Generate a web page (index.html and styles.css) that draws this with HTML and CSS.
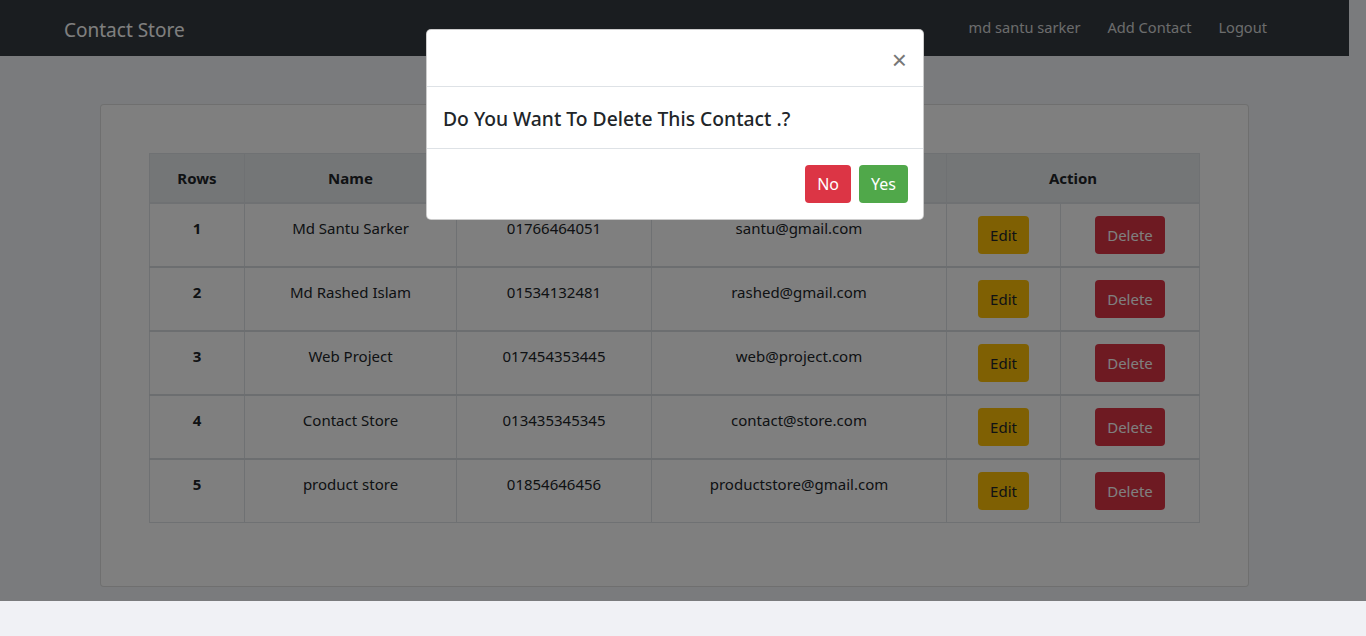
FILE: index.html
```html
<!DOCTYPE html>
<html lang="en">
<head>
<meta charset="utf-8">
<title>Contact Store</title>
<link rel="stylesheet" href="styles.css">
</head>
<body>
<div class="screen">
  <div class="page">
    <nav class="navbar">
      <a class="brand" href="#">Contact Store</a>
      <ul class="nav-links">
        <li><a href="#">md santu sarker</a></li>
        <li><a href="#">Add Contact</a></li>
        <li><a href="#">Logout</a></li>
      </ul>
    </nav>
    <main class="container">
      <div class="card">
        <table class="table">
          <thead>
            <tr>
              <th class="c-row">Rows</th>
              <th class="c-name">Name</th>
              <th class="c-phone">Phone</th>
              <th class="c-email">Email</th>
              <th colspan="2">Action</th>
            </tr>
          </thead>
          <tbody>
            <tr>
              <td class="num">1</td><td>Md Santu Sarker</td><td>01766464051</td><td>santu@gmail.com</td>
              <td class="c-edit"><button class="btn btn-warning">Edit</button></td>
              <td class="c-del"><button class="btn btn-danger">Delete</button></td>
            </tr>
            <tr>
              <td class="num">2</td><td>Md Rashed Islam</td><td>01534132481</td><td>rashed@gmail.com</td>
              <td class="c-edit"><button class="btn btn-warning">Edit</button></td>
              <td class="c-del"><button class="btn btn-danger">Delete</button></td>
            </tr>
            <tr>
              <td class="num">3</td><td>Web Project</td><td>017454353445</td><td>web@project.com</td>
              <td class="c-edit"><button class="btn btn-warning">Edit</button></td>
              <td class="c-del"><button class="btn btn-danger">Delete</button></td>
            </tr>
            <tr>
              <td class="num">4</td><td>Contact Store</td><td>013435345345</td><td>contact@store.com</td>
              <td class="c-edit"><button class="btn btn-warning">Edit</button></td>
              <td class="c-del"><button class="btn btn-danger">Delete</button></td>
            </tr>
            <tr>
              <td class="num">5</td><td>product store</td><td>01854646456</td><td>productstore@gmail.com</td>
              <td class="c-edit"><button class="btn btn-warning">Edit</button></td>
              <td class="c-del"><button class="btn btn-danger">Delete</button></td>
            </tr>
          </tbody>
        </table>
      </div>
    </main>
  </div>
  <div class="backdrop"></div>
  <div class="modal" role="dialog">
    <div class="modal-header">
      <button class="close" aria-label="Close">&times;</button>
    </div>
    <div class="modal-body">
      <h5 class="modal-text">Do You Want To Delete This Contact .?</h5>
    </div>
    <div class="modal-footer">
      <button class="btn btn-danger">No</button>
      <button class="btn btn-success">Yes</button>
    </div>
  </div>
</div>
<div class="bottom"></div>
</body>
</html>
```

FILE: styles.css
```css
* { box-sizing: border-box; }

body {
  margin: 0;
  background: #f0f1f5;
  font-family: "Noto Sans", "Open Sans", sans-serif;
  font-size: 15px;
  color: #212529;
}

.screen {
  position: relative;
  height: 601px;
  background: #f4f6fa;
  overflow: hidden;
}

.page {
  width: 1349px;
}

.navbar {
  height: 56px;
  background: #343a40;
  display: flex;
  align-items: center;
  justify-content: space-between;
  padding: 0 74px 0 64px;
}

.brand {
  color: #fff;
  font-size: 19px;
  text-decoration: none;
  padding-top: 4px;
}

.nav-links {
  list-style: none;
  display: flex;
  margin: 0;
  padding: 0;
}

.nav-links a {
  display: block;
  color: rgba(255, 255, 255, 0.82);
  text-decoration: none;
  font-size: 14.6px;
  padding: 0 8px 2px;
  margin-left: 11px;
}

.container {
  padding: 48px 100px 0;
}

.card {
  background: #fff;
  border: 1px solid rgba(0, 0, 0, 0.125);
  border-radius: 4px;
  padding: 48px 48px 48px;
  height: 483px;
}

.table {
  width: 100%;
  border-collapse: collapse;
  border: 1px solid #dee2e6;
}

.table th,
.table td {
  border: 1px solid #dee2e6;
  padding: 12px;
  text-align: center;
  vertical-align: top;
  line-height: 24px;
}

.table th {
  background: #e9ecef;
  font-weight: 700;
  border-bottom-width: 2px;
}

.table tbody tr + tr td {
  border-top: 2px solid #d8dce0;
}

.c-row { width: 95px; }
.c-name { width: 212px; }
.c-phone { width: 195px; }
.c-email { width: 295px; }
.c-edit { width: 114px; }

.table td.num { font-weight: 700; }

.btn {
  font-family: inherit;
  font-size: 15px;
  line-height: 24px;
  border: 1px solid transparent;
  border-radius: 4px;
  padding: 6px 11px;
  cursor: pointer;
}

.btn-warning { background: #ffc107; color: #212529; }
.btn-danger { background: #dc3545; color: #fff; }
.btn-success { background: #50a84a; color: #fff; }

.backdrop {
  position: absolute;
  inset: 0;
  background: rgba(0, 0, 0, 0.5);
}

.modal {
  position: absolute;
  top: 29px;
  left: 426px;
  width: 498px;
  background: #fff;
  border: 1px solid rgba(0, 0, 0, 0.2);
  border-radius: 5px;
}

.modal-header {
  height: 57px;
  border-bottom: 1px solid #dee2e6;
  display: flex;
  justify-content: flex-end;
  align-items: center;
  padding: 0 16px;
}

.close {
  background: none;
  border: 0;
  padding: 0;
  font-family: "Liberation Sans", sans-serif;
  font-size: 26px;
  font-weight: 400;
  color: #777;
  line-height: 1;
  margin-top: 4px;
  cursor: pointer;
}

.modal-body {
  height: 62px;
  border-bottom: 1px solid #dee2e6;
  padding: 20px 16px 0;
}

.modal-text {
  margin: 0;
  font-size: 19.3px;
  font-weight: 500;
  line-height: 24px;
  color: #212529;
}

.modal-footer {
  display: flex;
  justify-content: flex-end;
  gap: 8px;
  padding: 16px 15px 16px;
}

.modal-footer .btn { font-size: 16px; }

.bottom {
  height: 35px;
}
```
